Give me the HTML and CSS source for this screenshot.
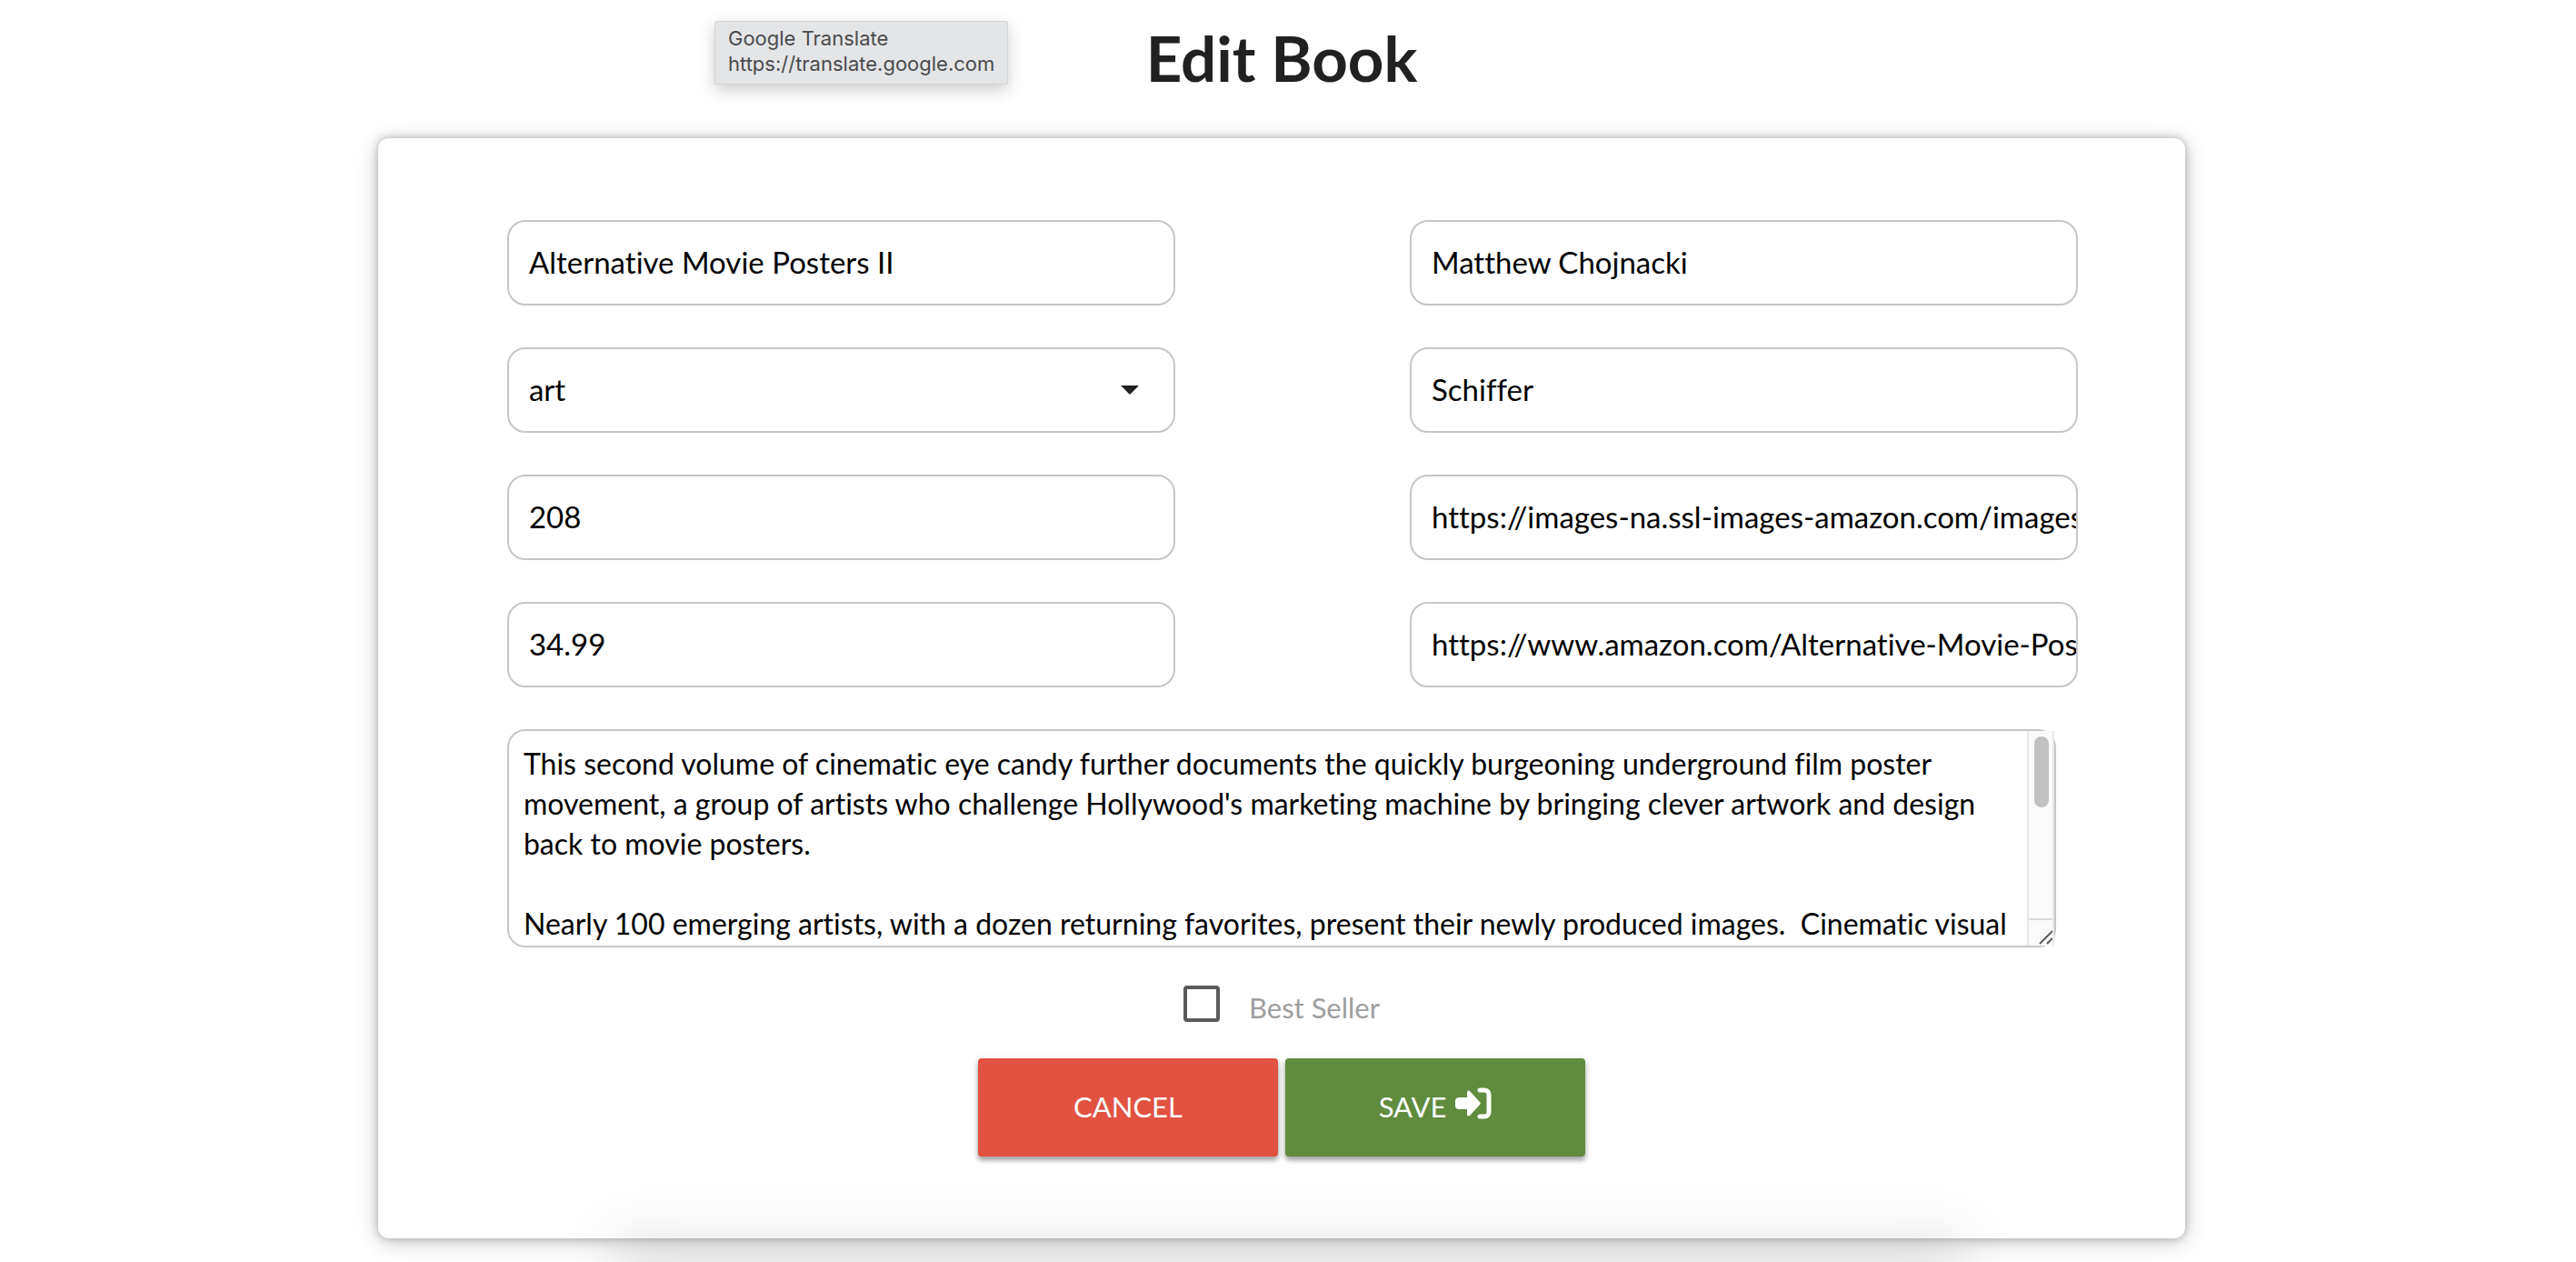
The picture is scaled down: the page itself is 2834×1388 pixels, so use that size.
FILE: index.html
```html
<!DOCTYPE html>
<html lang="en">
<head>
<meta charset="utf-8">
<meta name="viewport" content="width=device-width, initial-scale=1">
<title>Edit Book</title>
<link rel="stylesheet" href="styles.css">
</head>
<body>
<div class="tooltip" role="tooltip">Google Translate<br>https://translate.google.com</div>
<main class="page">
  <h1 class="title">Edit Book</h1>
  <form class="card">
    <div class="fields">
      <input class="field" type="text" aria-label="Title" value="Alternative Movie Posters II">
      <input class="field" type="text" aria-label="Author" value="Matthew Chojnacki">
      <div class="select">
        <select class="field" aria-label="Category">
          <option selected>art</option>
          <option>fiction</option>
          <option>history</option>
        </select>
        <svg class="caret" viewBox="0 0 20 10" aria-hidden="true"><path d="M0 0h20L10 10z"/></svg>
      </div>
      <input class="field" type="text" aria-label="Publisher" value="Schiffer">
      <input class="field" type="text" aria-label="Pages" value="208">
      <input class="field" type="text" aria-label="Image URL" value="https://images-na.ssl-images-amazon.com/images/I/poster.jpg">
      <input class="field" type="text" aria-label="Price" value="34.99">
      <input class="field" type="text" aria-label="Buy URL" value="https://www.amazon.com/Alternative-Movie-Posters-II">
    </div>
    <div class="editor">
      <textarea class="description" aria-label="Description">This second volume of cinematic eye candy further documents the quickly burgeoning underground film poster movement, a group of artists who challenge Hollywood's marketing machine by bringing clever artwork and design back to movie posters.

Nearly 100 emerging artists, with a dozen returning favorites, present their newly produced images.  Cinematic visual</textarea>
      <div class="scrollbar" aria-hidden="true">
        <div class="thumb"></div>
        <svg class="grip" viewBox="0 0 26 28"><path d="M12 26L26 12M20 26l6-6"/></svg>
      </div>
    </div>
    <label class="check"><input class="box" type="checkbox"><span class="check-text">Best Seller</span></label>
    <div class="actions">
      <button class="btn btn-cancel" type="button">CANCEL</button>
      <button class="btn btn-save" type="submit">SAVE
        <svg class="icon" viewBox="0 0 40 36" aria-hidden="true"><path d="M4 11h9V5.500c0-2 2-2.500 3-1.500l11 12c1 1 1 2 0 3L16 31c-1 1-3 .5-3-1.500V24H4c-2 0-4-1.500-4-3.500v-6C0 12.500 2 11 4 11z"/><path class="bracket" d="M27 3h5c3 0 5 2 5 5v19c0 3-2 5-5 5h-5"/></svg>
      </button>
    </div>
  </form>
  <div class="sheet"></div>
</main>
</body>
</html>
```
FILE: styles.css
```css
* { box-sizing: border-box; }

body {
  margin: 0;
  min-height: 100vh;
  overflow: hidden;
  background: #fff;
  color: #212121;
  font-family: Lato, "Noto Sans", sans-serif;
  font-variant-ligatures: none;
}

.page { padding-right: 14px; }

.title {
  margin: 0;
  padding: 20px 0 44px;
  text-align: center;
  font-size: 69px;
  font-weight: 700;
  line-height: 88px;
}

.card {
  width: 70.5%;
  margin: 0 auto;
  padding: 90px 142px;
  border-radius: 12px;
  background: #fff;
  box-shadow: 0 0 8px 1px rgba(0, 0, 0, .22), 0 4px 24px rgba(0, 0, 0, .2);
}

.fields {
  display: grid;
  grid-template-columns: 1fr 1fr;
  gap: 46px 258px;
  margin-right: -24px;
}

.field {
  display: block;
  width: 100%;
  min-width: 0;
  height: 94px;
  padding: 0 0 2px 22px;
  border: 2px solid #c6c6c6;
  border-radius: 20px;
  background: #fff;
  color: #000;
  font: 33px/44px Lato, sans-serif;
  font-variant-ligatures: none;
  appearance: none;
}

.select { position: relative; }

.caret {
  position: absolute;
  right: 40px;
  top: 42px;
  width: 20px;
  height: 10px;
  fill: #212121;
  pointer-events: none;
}

.editor {
  position: relative;
  margin-top: 46px;
}

.description {
  display: block;
  width: 100%;
  height: 240px;
  padding: 14px 46px 0 16px;
  border: 2px solid #c6c6c6;
  border-radius: 20px;
  background: #fff;
  color: #000;
  font: 32px/44px Lato, sans-serif;
  font-variant-ligatures: none;
  resize: none;
}

/* Scroll track laid over the right edge of the text area */
.scrollbar {
  position: absolute;
  top: 2px;
  right: 2px;
  bottom: 2px;
  display: flex;
  flex-direction: column;
  justify-content: space-between;
  width: 30px;
  border: solid #e8e8e8;
  border-width: 0 2px;
  background: #fafafa;
}

.thumb {
  width: 16px;
  height: 78px;
  margin: 6px 0 0 6px;
  border-radius: 8px;
  background: #c1c1c1;
}

.grip {
  width: 26px;
  height: 30px;
  border-top: 2px solid #d9d9d9;
  fill: none;
  stroke: #5c5c5c;
  stroke-width: 2;
}

.check {
  display: flex;
  align-items: center;
  justify-content: center;
  gap: 32px;
  width: fit-content;
  margin: 38px auto 36px;
  color: #9e9e9e;
  font-size: 31px;
}

.box {
  width: 40px;
  height: 40px;
  margin: 0;
  border: 4px solid #5a5a5a;
  border-radius: 4px;
  appearance: none;
}

.check-text {
  padding-top: 8px;
  line-height: 40px;
}

.actions {
  display: flex;
  justify-content: center;
  gap: 8px;
}

.btn {
  display: flex;
  align-items: center;
  justify-content: center;
  gap: 10px;
  width: 330px;
  height: 108px;
  padding: 0 0 2px;
  border: 0;
  border-radius: 4px;
  color: #fff;
  font: 31px/44px Lato, sans-serif;
  box-shadow: 0 4px 5px rgba(0, 0, 0, .3), 0 2px 10px rgba(0, 0, 0, .14);
}

.btn-cancel { background: #e15241; }
.btn-save { background: #618b3d; }

.icon {
  width: 40px;
  height: 36px;
  margin-bottom: 6px;
  fill: #fff;
}

.bracket {
  fill: none;
  stroke: #fff;
  stroke-width: 5;
  stroke-linecap: round;
}

/* Shadow cast upwards by the panel below the fold */
.sheet {
  width: 48.5%;
  height: 0;
  margin: 26px auto 0;
  box-shadow: 8px 30px 60px 60px rgba(0, 0, 0, .1);
}

.tooltip {
  position: absolute;
  left: 786px;
  top: 23px;
  padding: 4px 14px 8px;
  border: 1px solid #d2d3d5;
  border-radius: 2px;
  background: #e4e5e7;
  color: #4a4b4c;
  font: 22px/28px Inter, sans-serif;
  box-shadow: 0 6px 18px rgba(0, 0, 0, .2);
}
```
